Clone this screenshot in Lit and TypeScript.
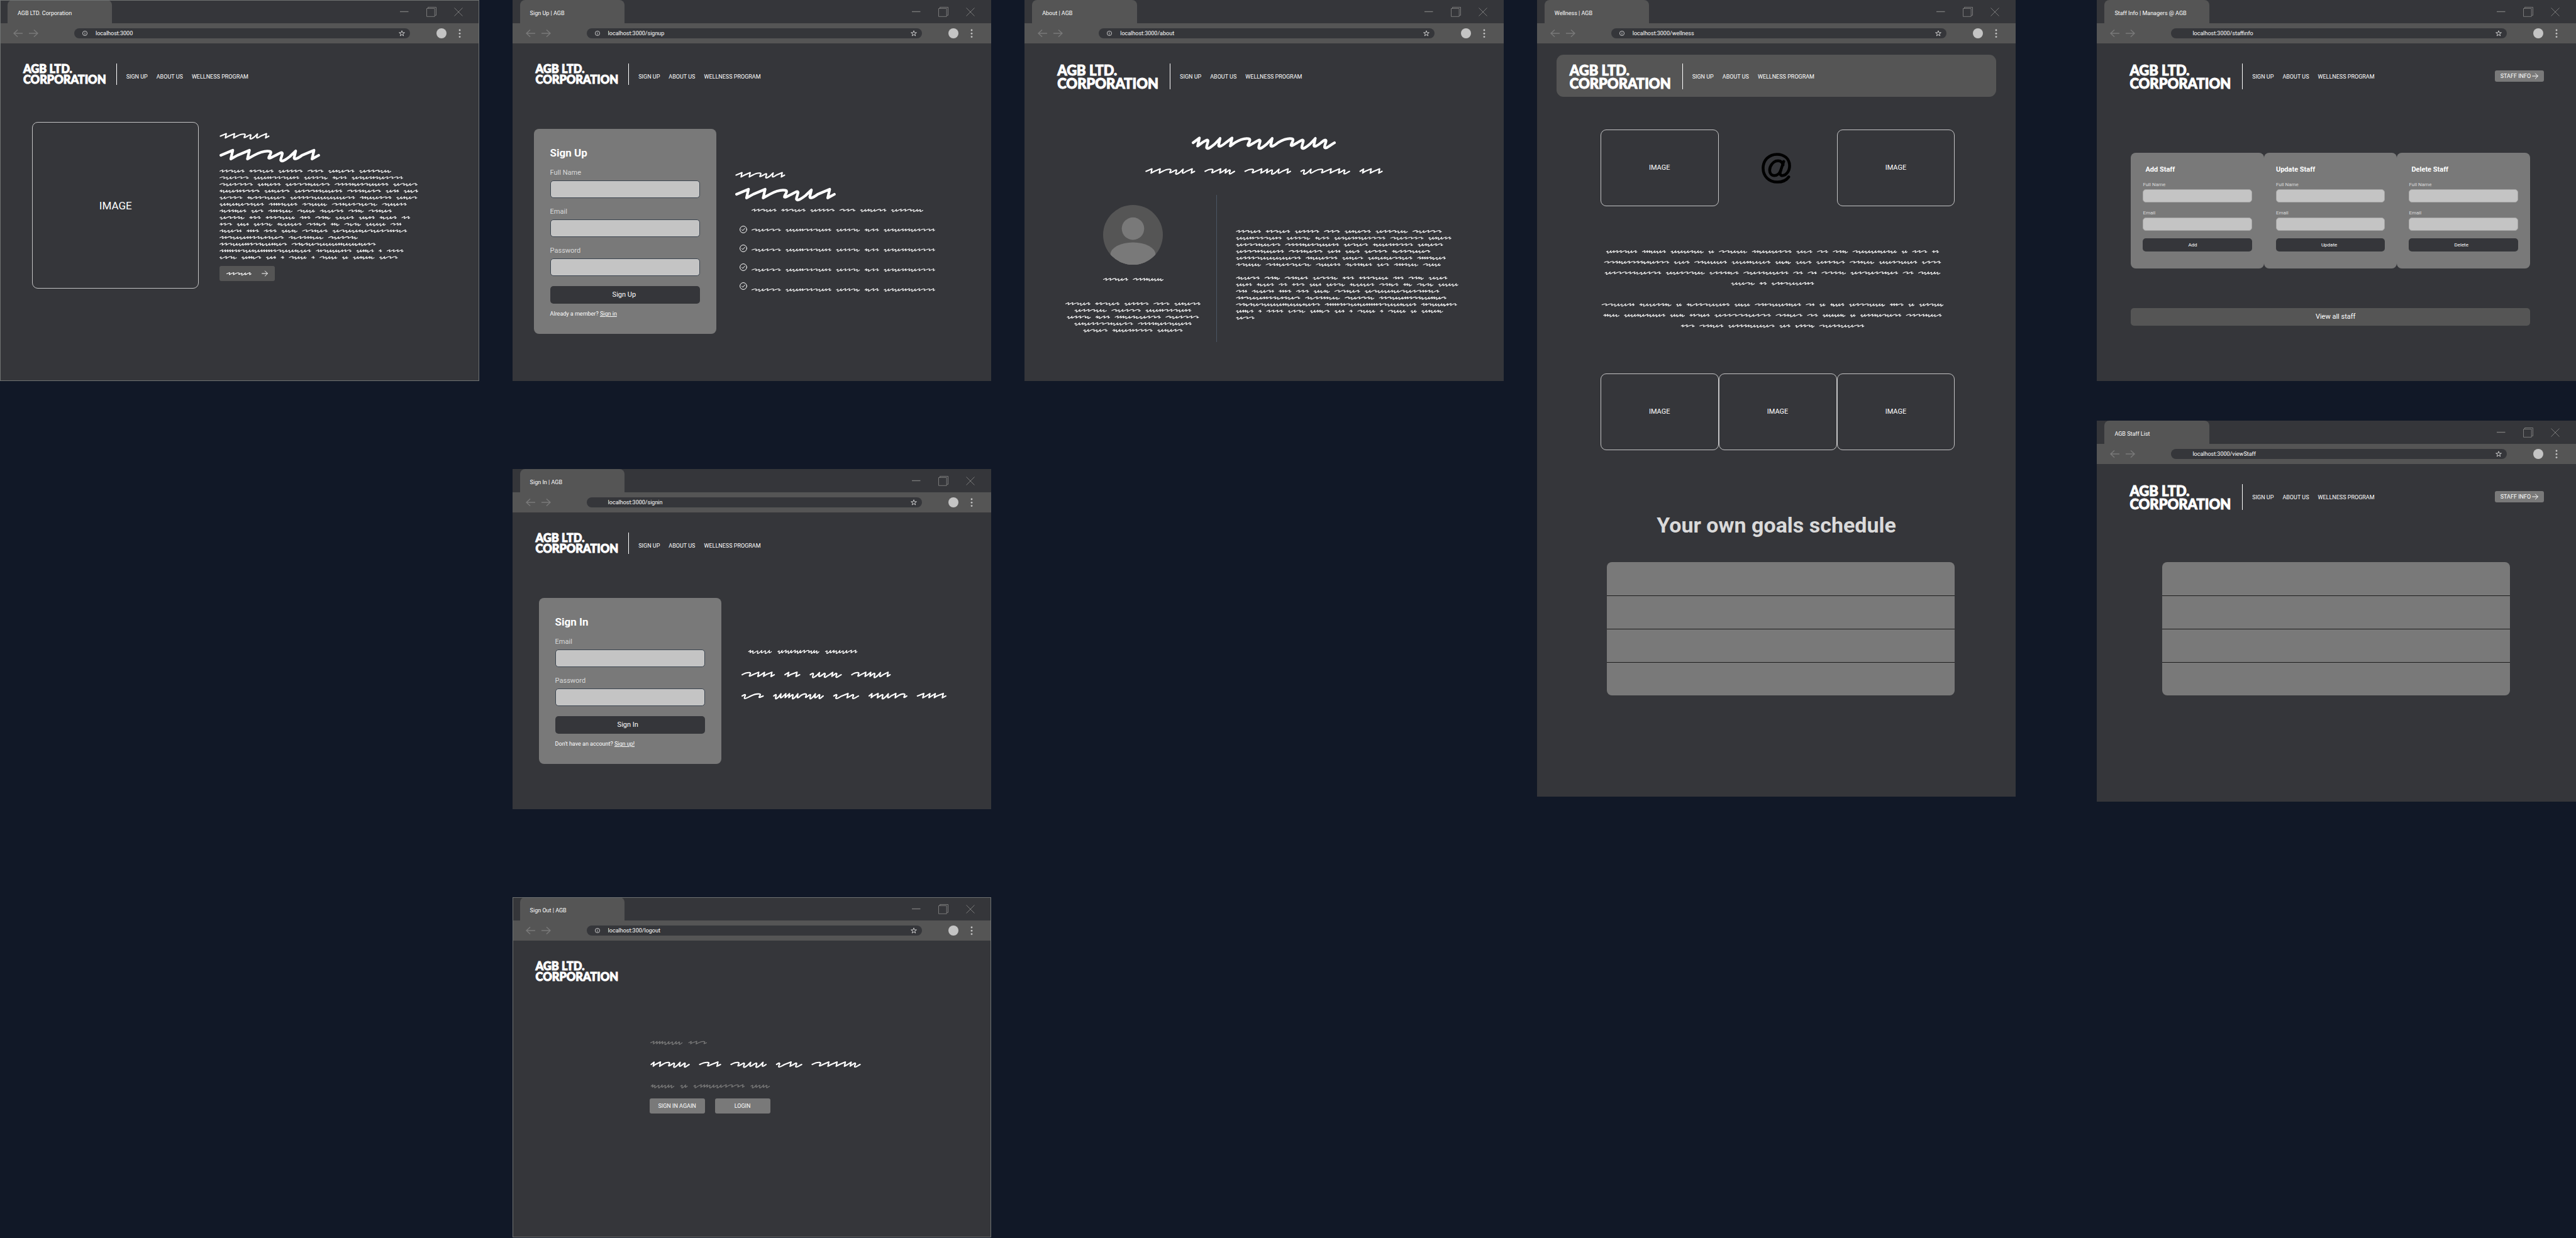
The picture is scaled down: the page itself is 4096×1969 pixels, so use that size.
import { LitElement, html, svg, css, nothing } from "lit";
import { customElement, property } from "lit/decorators.js";

/* ---------- Scribbled placeholder copy ---------- */

type Stroke = { advance: number; path: (x: (v: number) => string) => string };

/* Pen strokes that join at the mid line; x runs in drawing units, y is downwards. */
const STROKES: Record<string, Stroke> = {
  z: { advance: 50, path: (x) => `L${x(36)} -15L${x(30)} 11L${x(50)} 0` },
  m: { advance: 30, path: (x) => `L${x(21)} -14L${x(15)} 10L${x(30)} 0` },
  n: {
    advance: 65,
    path: (x) =>
      `C${x(15)} -8 ${x(34)} -14 ${x(46)} -12C${x(58)} -10 ${x(42)} 4 ${x(44)} 8C${x(46)} 11 ${x(56)} 4 ${x(65)} 0`,
  },
  u: {
    advance: 79,
    path: (x) =>
      `C${x(8)} -4 ${x(18)} -12 ${x(20)} -6C${x(20)} 0 ${x(14)} 10 ${x(15)} 15C${x(18)} 22 ${x(34)} 10 ${x(42)} 4L${x(60)} -13L${x(55)} 8C${x(56)} 14 ${x(66)} 10 ${x(79)} 0`,
  },
  c: {
    advance: 45,
    path: (x) =>
      `C${x(6)} -4 ${x(15)} -12 ${x(17)} -6C${x(17)} 0 ${x(10)} 10 ${x(12)} 14C${x(16)} 20 ${x(30)} 8 ${x(45)} 0`,
  },
};

const PX_PER_UNIT = 0.13223;
const WORD_STEP = 3.7246;
const WORD_GAP = 15;
const PEN = 8;

/* A word is its strokes followed by its width, such as "zznuz81". */
const lineLength = (words: string[]) =>
  words.reduce((sum, w) => sum + Number(w.replace(/\D/g, "")), 0) * WORD_STEP +
  Math.max(0, words.length - 1) * WORD_GAP * WORD_STEP;

function drawLine(words: string[], startX: number, y: number): string {
  let cursor = startX;
  let d = "";
  for (const word of words) {
    const width = Number(word.replace(/\D/g, "")) * WORD_STEP;
    const keys = word.replace(/\d/g, "").split("");
    const natural = keys.reduce((s, k) => s + STROKES[k].advance, 0);
    const stretch = (width - PEN) / natural;
    let at = cursor + PEN / 2;
    d += `M${at.toFixed(1)} ${y}`;
    for (const key of keys) {
      const x = (v: number) => (at + v * stretch).toFixed(1);
      d += STROKES[key]
        .path(x)
        .replace(/ (-?\d+)(?=[LC ]|$)/g, (_m, v) => ` ${Number(v) + y}`);
      at += STROKES[key].advance * stretch;
    }
    cursor += width + WORD_GAP * WORD_STEP;
  }
  return d;
}

@customElement("scribble-text")
class ScribbleText extends LitElement {
  @property({ attribute: false }) lines: string[] = [];
  @property({ type: Number }) size = 1;
  @property({ type: Number }) pitch = 80;
  @property() align = "start";

  static styles = css`
    :host { display: block; flex: none; }
    .ink {
      display: block;
      fill: none;
      stroke: currentColor;
      stroke-linecap: round;
      stroke-linejoin: round;
      overflow: visible;
    }
  `;

  render() {
    const rows = this.lines.map((l) => l.split(" ").filter(Boolean));
    const longest = Math.max(...rows.map(lineLength));
    const tall = rows.length * this.pitch;
    const scale = PX_PER_UNIT * this.size;
    return html`<svg
      class="ink"
      aria-hidden="true"
      width=${Math.round(longest * scale)}
      height=${Math.round(tall * scale)}
      viewBox="0 0 ${longest.toFixed(0)} ${tall}"
      stroke-width=${PEN}
    >
      ${rows.map((words, i) => {
        const x = this.align === "center" ? (longest - lineLength(words)) / 2 : 0;
        return svg`<path d=${drawLine(words, x, (i + 0.5) * this.pitch)}></path>`;
      })}
    </svg>`;
  }
}

const STORY = `zznuz81 mznuz79 uzzzn79 nzn52 umunz85 uzznuc104
 nuznn95 uummnznumz148 uzznc77 mczz47 uzuzmzuznnz166
 nuznzn108 umuzz75 uznnmuczn144 nzzzmuznuuzz174 unun79
 muuzmznzn130 umuzn82 uznnmzuuzz155 nzzmuzn110 uzm43 ucz47
 unzn74 mczznuun124 uzzznuuuuunz210 zmuuznz103 umun68
 umumunzuz144 zmmmzcuz93 znuuc81 nzmuznunc147 nuuzz80
 zczzmuz87 un40 zmmzuc79 nuu58 zcunz77 nzmc50 nzmuz76
 unzzc81 mzz38 mzznuu95 zmz35 nzmc50 uuz61 ucmz52 mcuz56 zz28
 mzn41 ucm39 uznc61 mcuuz80 nzmcz63 mmc29 nczc54 uuu65 nzm36
 zcunm72 mmmz41 zzz42 ucmc52 nnmuz83 unuumunuznmmzcz241
 zmnuummzzcmzun208 zczzmmuc113 nuznzc96
 zznuummznzcummun218 nzczunuuummuucmuzn272
 zmmmmzmnumummmmmznuumcuz296 zmnuucmzn116 ummcz57 m11 zzzz55
 cznc56 ummcn64 um33 m11 nuu58 m11 nuu58 u20 umumc70 unn60`
  .split(/\s+/)
  .filter(Boolean);

/* Breaks the story into lines that hold the given number of words. */
function breakStory(from: number, counts: number[]): string[] {
  let at = from;
  return counts.map((count) => {
    const line = STORY.slice(at, at + count).join(" ");
    at += count;
    return line;
  });
}

const HOME_COPY = breakStory(0, [6, 5, 5, 6, 5, 5, 7, 9, 9, 6, 3, 2, 5, 10]);
const ABOUT_COPY = [
  ...breakStory(0, [7, 6, 5, 6, 5, 7]),
  "",
  ...breakStory(36, [9, 11, 7, 4, 3, 12, 1]),
];
const ABOUT_BIO = [
  ...breakStory(0, [5, 3]),
  "uzznc77 mczz47 zmmuzcuznz149 nuznzn108",
  "umuzznnmuczn190 nzzzmuznuuzz174",
  ...breakStory(15, [3]),
];
const ABOUT_LEAD = ["zznuz81 nzmc50 nzmuz76 unzzc81 mzz38"];
const BENEFIT = STORY.slice(6, 11).join(" ");
const WELLNESS_COPY = [
  "umzznuz101 zmmuuz78 uuuzuc107 u19 nnuuc92 zmuuuznz129 ucz52 nz36 nzmc49 nuuumuzu144 u19 zzn49 mz23",
  "nnzmuznzzcmuznn211 cuz51 nzuuuz106 uummuuz126 ucmc51 ucz52 umzzcz93 nzmuc80 uuznuuz124 cznz62",
  "uznnzzcuznz183 uuznnuc126 czzzmcz95 nuzzuuzz146 nz32 nm30 nnzzc79 uznuznmuz154 nz35 nuuc72",
  "uunc77 mz24 czmnuuzmz138",
  "",
  "nnuuzm107 muuzzmc104 u19 mczznuumz140 ucu51 nzmnuuzmuz150 nm29 u20 mcuz46 uznnuuc117 mmmn45 u20 uznuc79",
  "mmuc52 uumuzuuz134 ucmc48 mznuz66 uzznnzuznz183 nzmun87 nz35 uuumc74 u18 uzzmununz133 nznzmucz116",
  "mzn45 nzmuz78 uzzzmuuun151 uz36 czznc63 nuzzuunz146",
];

/* ---------- Icons ---------- */

const arrowRight = html`<svg class="arrow" aria-hidden="true" viewBox="0 0 10 10" width="10" height="10" fill="none" stroke="currentColor" stroke-width="1" stroke-linecap="round" stroke-linejoin="round"><path d="M.6 5H9.2M5.4 1L9.4 5L5.4 9"></path></svg>`;

const checkIcon = html`<svg aria-hidden="true" viewBox="0 0 12 12" width="12" height="12" fill="none" stroke="currentColor" stroke-width="1" stroke-linecap="round" stroke-linejoin="round"><circle cx="6" cy="6" r="5.4"></circle><path d="M3.6 6.2L5.2 7.9L8.3 4.2"></path></svg>`;

const atIcon = html`<svg aria-hidden="true" viewBox="0 0 88 92" width="47" height="49" fill="none" stroke="#000" stroke-width="8.500" stroke-linecap="round" stroke-linejoin="round"><path d="M81 72C74 82 63 87.500 47 87.500C22 87.500 4.500 70 4.500 46C4.500 22 22 4.500 46 4.500C68 4.500 83.500 18 83.500 39C83.500 56 72 68 62 68C56 68 54 63 56 56L66 26"></path><path d="M64 36C62 28 56 24 49 24C34 24 24 40 24 52C24 62 30 68 38 68C48 68 55 60 57 53"></path></svg>`;

const personIcon = html`<svg class="avatar" aria-hidden="true" viewBox="0 0 96 96" width="95" height="95"><defs><clipPath id="face"><circle cx="48" cy="48" r="48"></circle></clipPath></defs><g clip-path="url(#face)"><rect width="96" height="96" fill="#555555"></rect><circle cx="48" cy="38" r="18" fill="#797979"></circle><ellipse cx="48" cy="80" rx="36.5" ry="20" fill="#797979"></ellipse><rect x="11.500" y="80" width="73" height="16" fill="#797979"></rect></g></svg>`;

/* ---------- Browser window ---------- */

@customElement("browser-window")
class BrowserWindow extends LitElement {
  @property() label = "";
  @property() url = "";
  @property({ type: Boolean }) info = false;

  static styles = css`
    :host {
      display: flex;
      flex-direction: column;
      background: #35363a;
      color: #fff;
      font-family: Roboto, "Liberation Sans", sans-serif;
    }
    .strip {
      display: flex;
      align-items: stretch;
      justify-content: space-between;
      height: 37px;
      padding: 0 26px 0 12px;
    }
    .tab {
      display: flex;
      align-items: center;
      width: 23%;
      min-width: 120px;
      padding: 4px 16px 0;
      border-radius: 8px 8px 0 0;
      background: #555555;
      font-size: 9px;
      line-height: 10px;
      white-space: nowrap;
      box-sizing: border-box;
    }
    .controls { display: flex; align-items: center; gap: 28px; color: #797979; }
    button {
      display: block;
      padding: 0;
      border: 0;
      background: none;
      color: inherit;
      line-height: 0;
    }
    svg { display: block; fill: none; stroke: currentColor; }
    .toolbar {
      display: flex;
      align-items: center;
      height: 32px;
      padding: 0 29px 0 21px;
      background: #555555;
      color: #797979;
    }
    .history { display: flex; gap: 10px; width: 97px; }
    .address {
      display: flex;
      flex: 1;
      align-items: center;
      height: 16px;
      padding: 0 8px 0 13px;
      border-radius: 8px;
      background: #35363a;
      color: #fff;
      box-sizing: border-box;
    }
    .site { width: 8px; margin-right: 13px; }
    .url {
      flex: 1;
      min-width: 0;
      padding: 0;
      border: 0;
      background: none;
      color: inherit;
      font: 9px/12px Roboto, "Liberation Sans", sans-serif;
    }
    .profile {
      width: 16px;
      height: 16px;
      margin: 0 19px 0 42px;
      border-radius: 50%;
      background: #c4c4c4;
    }
    .more { color: #c4c4c4; }
    .page { display: flex; flex-direction: column; flex: 1; }
  `;

  render() {
    return html`
      <div class="strip">
        <div class="tab">${this.label}</div>
        <div class="controls">
          <button type="button" aria-label="Minimize">
            <svg viewBox="0 0 14 14" width="14" height="14"><path d="M0 6.500H13.500" stroke-width="1.400"></path></svg>
          </button>
          <button type="button" aria-label="Restore">
            <svg viewBox="0 0 16 16" width="16" height="16"><path d="M.5 2.500H13.200V15.300H.5ZM2.500 2.500V.5H15.500V13.300H13.200"></path></svg>
          </button>
          <button type="button" aria-label="Close">
            <svg viewBox="0 0 14 14" width="14" height="14"><path d="M.5 .5L13.500 13.500M13.500 .5L.5 13.500"></path></svg>
          </button>
        </div>
      </div>
      <div class="toolbar">
        <div class="history">
          <button type="button" aria-label="Back">
            <svg viewBox="0 0 15 12" width="15" height="12" stroke-width="1.500"><path d="M15 6H1M7 .5L1 6L7 11.500"></path></svg>
          </button>
          <button type="button" aria-label="Forward">
            <svg viewBox="0 0 15 12" width="15" height="12" stroke-width="1.500"><path d="M0 6H14M8 .5L14 6L8 11.500"></path></svg>
          </button>
        </div>
        <div class="address">
          <span class="site">
            ${this.info
              ? html`<svg viewBox="0 0 8 8" width="8" height="8" stroke-width=".7"><circle cx="4" cy="4" r="3.600"></circle><path d="M4 3.500V6M4 2V2.700"></path></svg>`
              : nothing}
          </span>
          <input class="url" type="text" aria-label="Address" .value=${this.url} />
          <button type="button" aria-label="Bookmark">
            <svg viewBox="0 0 10 10" width="10" height="10" stroke-width=".7"><path d="M5 .8L6.100 3.900H9.400L6.700 5.800L7.700 9L5 7.100L2.300 9L3.300 5.800L.6 3.900H3.900Z"></path></svg>
          </button>
        </div>
        <button class="profile" type="button" aria-label="Profile"></button>
        <button class="more" type="button" aria-label="Menu">
          <svg viewBox="0 0 4 14" width="4" height="14"><g fill="currentColor" stroke="none"><circle cx="2" cy="2" r="1.400"></circle><circle cx="2" cy="7.300" r="1.400"></circle><circle cx="2" cy="12.600" r="1.400"></circle></g></svg>
        </button>
      </div>
      <div class="page"><slot></slot></div>
    `;
  }
}

/* ---------- Site header ---------- */

@customElement("site-header")
class SiteHeader extends LitElement {
  @property({ type: Boolean, reflect: true }) large = false;
  @property({ type: Boolean, reflect: true }) bar = false;
  @property({ type: Boolean }) bare = false;
  @property({ type: Boolean }) staff = false;

  static styles = css`
    :host { display: block; padding: 32px 51px 0 37px; }
    :host([large]) { padding-left: 52px; }
    :host([bar]) {
      margin: 18px 31px 0;
      padding: 14px 20px 12px 21px;
      border-radius: 11px;
      background: #555555;
    }
    .row { display: flex; align-items: flex-start; min-height: 41px; }
    .logo {
      height: 34px;
      padding-right: 16px;
      font-family: Lato, "Open Sans", sans-serif;
      font-weight: 900;
      font-size: 18px;
      line-height: 17px;
      white-space: nowrap;
      -webkit-text-stroke: 1px #fff;
    }
    .ruled { border-right: 1px solid #fff; margin-right: 15px; }
    :host([large]) .logo { height: 41px; padding-right: 18px; font-size: 22px; line-height: 21px; }
    nav { display: flex; align-items: center; gap: 14px; height: 41px; }
    a { color: #fff; font-size: 9px; line-height: 12px; text-decoration: none; white-space: nowrap; }
    .staff {
      display: flex;
      align-items: center;
      justify-content: center;
      gap: 2px;
      width: 78px;
      height: 18px;
      margin: 11px 0 0 auto;
      padding: 0;
      border: 0;
      border-radius: 3px;
      background: #797979;
      color: #fff;
      font: 9px/12px Roboto, "Liberation Sans", sans-serif;
    }
  `;

  render() {
    return html`<header class="row">
      <div class="logo ${this.bare ? "" : "ruled"}">AGB LTD.<br />CORPORATION</div>
      ${this.bare
        ? nothing
        : html`<nav>
            <a href="#signup">SIGN UP</a>
            <a href="#about">ABOUT US</a>
            <a href="#wellness">WELLNESS PROGRAM</a>
          </nav>`}
      ${this.staff
        ? html`<button class="staff" type="button">STAFF INFO ${arrowRight}</button>`
        : nothing}
    </header>`;
  }
}

/* ---------- Canvas ---------- */

@customElement("app-root")
class AppRoot extends LitElement {
  static styles = css`
    :host {
      display: block;
      min-height: 100vh;
      background: #111827;
      color: #fff;
      font-family: Roboto, "Liberation Sans", sans-serif;
    }
    .canvas { display: flex; align-items: flex-start; gap: 53px; }
    .column { display: flex; flex: 1 1 0; min-width: 0; flex-direction: column; gap: 140px; }
    .staff-column { gap: 63px; margin-left: 76px; }
    .screen { min-height: 606px; }
    .short { min-height: 541px; }
    .tall { min-height: 1267px; }
    .outlined { outline: 1px solid #6f7272; outline-offset: -1px; }

    .split { display: flex; align-items: flex-start; }
    .stack { display: flex; flex-direction: column; align-items: flex-start; }
    .image {
      display: flex;
      align-items: center;
      justify-content: center;
      margin: 0;
      border: 1px solid #c4c4c5;
      border-radius: 9px;
      box-sizing: border-box;
      font-size: 11px;
      line-height: 14px;
    }

    .home { gap: 33px; padding: 52px 47px 0 51px; }
    .hero { width: 40%; aspect-ratio: 1; font-size: 17px; line-height: 20px; }
    .home .stack { gap: 4px; padding-top: 12px; }
    .cta {
      display: flex;
      align-items: center;
      gap: 16px;
      height: 24px;
      margin-top: 4px;
      padding: 0 11px;
      border: 0;
      border-radius: 3px;
      background: #555555;
      color: #fff;
    }

    .account { gap: 30px; padding: 63px 35px 0 34px; }
    .account.signin { gap: 32px; padding-left: 42px; }
    .card {
      display: flex;
      flex-direction: column;
      box-sizing: border-box;
      border-radius: 8px;
      background: #797979;
    }
    .account .card { width: 290px; padding: 28px 26px 26px; }
    .card h2 { margin: 0; font-size: 17px; line-height: 20px; font-weight: 700; }
    label { margin: 16px 0 6px; color: #dadada; font-size: 11px; line-height: 12px; }
    input {
      height: 28px;
      padding: 0 8px;
      box-sizing: border-box;
      border: 1px solid #3b444f;
      border-radius: 5px;
      background: #c4c4c4;
      font: 11px/14px Roboto, "Liberation Sans", sans-serif;
    }
    .submit {
      height: 28px;
      margin-top: 16px;
      padding: 0 0 0 99px;
      border: 0;
      border-radius: 5px;
      background: #35363a;
      color: #fff;
      font: 11px/14px Roboto, "Liberation Sans", sans-serif;
      text-align: left;
    }
    .hint { margin: 10px 0 0; font-size: 9px; line-height: 12px; }
    .hint a { color: inherit; }
    .pitch { gap: 4px; padding-top: 63px; }
    .signin .pitch { gap: 13px; padding-top: 79px; }
    .indent { padding-left: 9px; }
    .benefits { display: flex; gap: 7px; padding-left: 7px; }
    .checks { display: flex; flex-direction: column; gap: 18px; padding-top: 30px; }
    .checks svg { display: block; }
    .points { display: flex; flex-direction: column; gap: 10px; }

    .about-title { display: flex; flex-direction: column; align-items: center; gap: 19px; padding-top: 69px; }
    .about { display: grid; grid-template-columns: 266px 1fr; padding: 27px 40px 0; }
    .person {
      display: flex;
      flex-direction: column;
      align-items: center;
      min-height: 234px;
      padding-top: 16px;
      border-right: 1px solid #4b5563;
      box-sizing: border-box;
    }
    .person .name { padding: 18px 0 28px; }
    .bio { padding: 53px 0 0 30px; }

    .gallery { display: grid; grid-template-columns: repeat(3, 1fr); margin: 0 97px 0 101px; }
    .first { padding-top: 52px; }
    .gallery .image { height: 122px; }
    .glyph { display: flex; align-items: center; justify-content: center; padding-right: 4px; }
    .wellness-copy { display: flex; justify-content: center; padding: 64px 12px 67px 0; }
    .goals { margin: 99px 0 39px; color: #dadada; font-size: 34px; line-height: 40px; font-weight: 700; text-align: center; }
    .rows { border-spacing: 0; border-radius: 8px; background: #797979; }
    .rows td { height: 53px; padding: 0; box-sizing: border-box; border-top: 1px solid #1c1c1c; }
    .rows tr:first-child td { border-top: 0; }
    .schedule { margin: 0 97px 0 111px; }
    .roster { margin: 83px 105px 0 104px; }

    .staff-cards { display: grid; grid-template-columns: repeat(3, 1fr); margin: 101px 73px 0 54px; }
    .staff-cards .card { padding: 20px 19px 27px; }
    .staff-cards h2 { font-size: 11px; line-height: 14px; }
    .staff-cards .inset { padding-left: 4px; }
    .staff-cards label { margin: 12px 0 2px; font-size: 8px; line-height: 10px; }
    .staff-cards input { height: 21px; border-color: #a6a6a6; }
    .staff-cards .submit { height: 21px; margin-top: 12px; padding-left: 72px; font-size: 8px; line-height: 10px; }
    .view-all {
      height: 28px;
      margin: 63px 73px 0 54px;
      padding: 0 0 0 16px;
      border: 0;
      border-radius: 5px;
      background: #555555;
      color: #fff;
      font: 11px/14px Roboto, "Liberation Sans", sans-serif;
    }

    .signout { gap: 7px; padding: 83px 0 0 218px; }
    .muted { color: #797979; }
    .actions { display: flex; gap: 16px; margin-top: 6px; }
    .actions button {
      width: 88px;
      height: 24px;
      padding: 0;
      border: 0;
      border-radius: 3px;
      background: #797979;
      color: #fff;
      font: 9px/12px Roboto, "Liberation Sans", sans-serif;
    }
  `;

  private field(id: string, label: string, type = "text") {
    return html`<label for=${id}>${label}</label><input id=${id} type=${type} />`;
  }

  private staffCard(action: string, inset: boolean) {
    const key = action.toLowerCase();
    return html`<form class="card" @submit=${(e: Event) => e.preventDefault()}>
      <h2 class=${inset ? "inset" : ""}>${action} Staff</h2>
      ${this.field(`${key}-name`, "Full Name")} ${this.field(`${key}-email`, "Email", "email")}
      <button class="submit" type="submit">${action}</button>
    </form>`;
  }

  private rows(name: string, label: string) {
    return html`<table class="rows ${name}" aria-label=${label}>
      <tbody>
        ${[0, 1, 2, 3].map(() => html`<tr><td></td></tr>`)}
      </tbody>
    </table>`;
  }

  render() {
    return html`<main class="canvas">
      <div class="column">
        <browser-window class="screen outlined" label="AGB LTD. Corporation" url="localhost:3000" info>
          <site-header></site-header>
          <section class="split home">
            <figure class="image hero">IMAGE</figure>
            <div class="stack">
              <scribble-text .lines=${["zznuz81"]} size="2"></scribble-text>
              <scribble-text .lines=${["zznuz81"]} size="4" pitch="60"></scribble-text>
              <scribble-text .lines=${HOME_COPY}></scribble-text>
              <button class="cta" type="button" aria-label="Continue">
                <scribble-text .lines=${["zznuz81"]}></scribble-text>
                ${arrowRight}
              </button>
            </div>
          </section>
        </browser-window>
      </div>

      <div class="column">
        <browser-window class="screen" label="Sign Up | AGB" url="localhost:3000/signup" info>
          <site-header></site-header>
          <section class="split account">
            <form class="card" @submit=${(e: Event) => e.preventDefault()}>
              <h2>Sign Up</h2>
              ${this.field("signup-name", "Full Name")} ${this.field("signup-email", "Email", "email")}
              ${this.field("signup-password", "Password", "password")}
              <button class="submit" type="submit">Sign Up</button>
              <p class="hint">Already a member? <a href="#signin">Sign in</a></p>
            </form>
            <div class="stack pitch">
              <scribble-text .lines=${["zznuz81"]} size="2"></scribble-text>
              <scribble-text .lines=${["zznuz81"]} size="4" pitch="60"></scribble-text>
              <div class="benefits">
                <div class="checks">${[0, 1, 2, 3].map(() => checkIcon)}</div>
                <div class="points">
                  <scribble-text .lines=${breakStory(0, [6])}></scribble-text>
                  <scribble-text .lines=${[BENEFIT, BENEFIT, BENEFIT, BENEFIT]} pitch="240"></scribble-text>
                </div>
              </div>
            </div>
          </section>
        </browser-window>

        <browser-window class="screen short" label="Sign In | AGB" url="localhost:3000/signin">
          <site-header></site-header>
          <section class="split account signin">
            <form class="card" @submit=${(e: Event) => e.preventDefault()}>
              <h2>Sign In</h2>
              ${this.field("signin-email", "Email", "email")}
              ${this.field("signin-password", "Password", "password")}
              <button class="submit" type="submit">Sign In</button>
              <p class="hint">Don't have an account? <a href="#signup">Sign up!</a></p>
            </form>
            <div class="stack pitch">
              <scribble-text class="indent" .lines=${["mcuu62 uzuzuznuc110 umuuzz85"]} size="1.25"></scribble-text>
              <scribble-text
                .lines=${["nzmz54 mz26 ucmc52 nzmuz64", "cn36 ummunuc82 czc42 mzuzn63 zmmz48"]}
                size="2"
                pitch="128"
              ></scribble-text>
            </div>
          </section>
        </browser-window>

        <browser-window class="screen short outlined" label="Sign Out | AGB" url="localhost:300/logout" info>
          <site-header bare></site-header>
          <section class="stack signout">
            <scribble-text class="muted" .lines=${["zmmmuuc85 mzn49"]} size="1.25"></scribble-text>
            <scribble-text .lines=${["mznuc64 nz36 nuu59 czc43 nzzzmc80"]} size="2" pitch="160"></scribble-text>
            <scribble-text class="muted" .lines=${["mcuuc62 u20 czmmuuznnz135 uuc51"]} size="1.25"></scribble-text>
            <div class="actions">
              <button type="button">SIGN IN AGAIN</button>
              <button type="button">LOGIN</button>
            </div>
          </section>
        </browser-window>
      </div>

      <div class="column">
        <browser-window class="screen" label="About | AGB" url="localhost:3000/about" info>
          <site-header large></site-header>
          <div class="about-title">
            <scribble-text .lines=${["mumnunuc116"]} size="4" pitch="60"></scribble-text>
            <scribble-text .lines=${ABOUT_LEAD} size="2"></scribble-text>
          </div>
          <section class="about">
            <div class="person">
              ${personIcon}
              <scribble-text class="name" .lines=${["zznuz81 nzzmuuc99"]}></scribble-text>
              <scribble-text .lines=${ABOUT_BIO} align="center"></scribble-text>
            </div>
            <scribble-text class="bio" .lines=${ABOUT_COPY}></scribble-text>
          </section>
        </browser-window>
      </div>

      <div class="column">
        <browser-window class="screen tall" label="Wellness | AGB" url="localhost:3000/wellness" info>
          <site-header large bar></site-header>
          <section class="gallery first">
            <figure class="image">IMAGE</figure>
            <div class="glyph">${atIcon}</div>
            <figure class="image">IMAGE</figure>
          </section>
          <div class="wellness-copy">
            <scribble-text .lines=${WELLNESS_COPY} pitch="128" align="center"></scribble-text>
          </div>
          <section class="gallery">
            <figure class="image">IMAGE</figure>
            <figure class="image">IMAGE</figure>
            <figure class="image">IMAGE</figure>
          </section>
          <h1 class="goals">Your own goals schedule</h1>
          ${this.rows("schedule", "Schedule")}
        </browser-window>
      </div>

      <div class="column staff-column">
        <browser-window class="screen" label="Staff Info | Managers @ AGB" url="localhost:3000/staffinfo">
          <site-header large staff></site-header>
          <section class="staff-cards">
            ${this.staffCard("Add", true)} ${this.staffCard("Update", false)}
            ${this.staffCard("Delete", true)}
          </section>
          <button class="view-all" type="button">View all staff</button>
        </browser-window>

        <browser-window class="screen" label="AGB Staff List" url="localhost:3000/viewStaff">
          <site-header large staff></site-header>
          ${this.rows("roster", "Staff")}
        </browser-window>
      </div>
    </main>`;
  }
}
